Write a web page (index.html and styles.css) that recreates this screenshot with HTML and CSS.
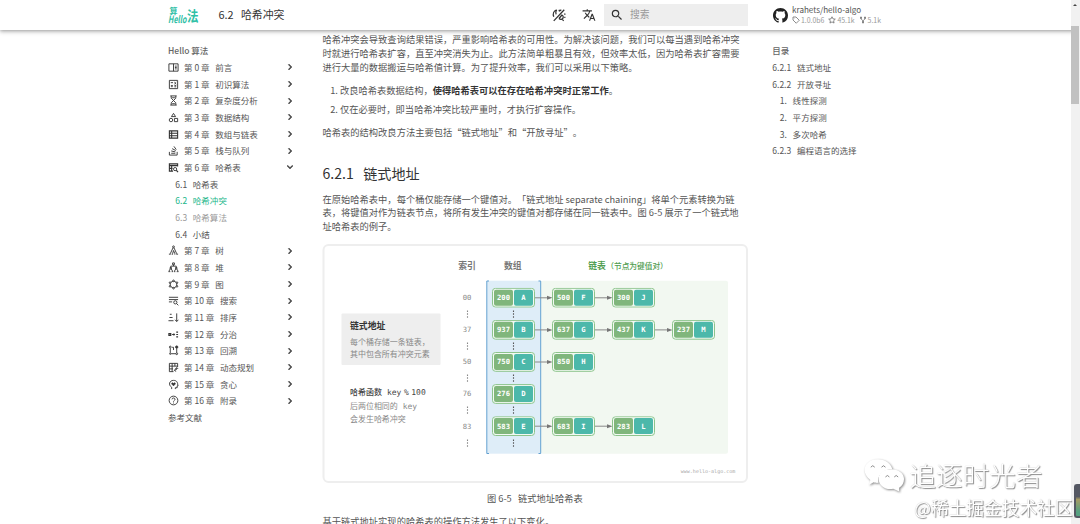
FILE: index.html
```
<!DOCTYPE html>
<html lang="zh-CN">
<head>
  <meta charset="UTF-8">
  <meta name="viewport" content="width=device-width, initial-scale=1.0">
  <title>6.2 哈希冲突 - Hello 算法</title>
  <link rel="stylesheet" href="styles.css">
</head>
<body>
  <svg class="defs" width="0" height="0">
    <symbol id="chevron" viewBox="0 0 24 24"><path d="M8.59 16.58 13.17 12 8.59 7.41 10 6l6 6-6 6z" stroke="currentColor"/></symbol>
    <symbol id="node" viewBox="0 0 43 20">
      <rect x=".5" y=".5" width="42" height="18.8" rx="3" fill="#f3faf3" stroke="#8cc48c"/>
      <rect x="2" y="1.9" width="19" height="16" rx="2" fill="#80b67c"/>
      <rect x="22" y="1.9" width="19" height="16" rx="2" fill="#4cb8aa"/>
    </symbol>
    <symbol id="arrow" viewBox="0 0 18 6"><path d="M0 3h13" stroke="#888" stroke-width="1"/><path d="M12 1l5.5 2L12 5z" fill="#777"/></symbol>
    <symbol id="dots" viewBox="0 0 2 8"><path d="M1 .4v1.5M1 3.3v1.5M1 6.2v1.5" stroke="currentColor" stroke-width="1.2"/></symbol>
  </svg>

  <header class="header">
    <svg class="logo" viewBox="0 0 32 30">
      <text x="1.5" y="13.6" font-size="8">算</text>
      <text x="0" y="22.5" font-size="10" font-style="italic" textLength="18.5" lengthAdjust="spacingAndGlyphs">Hello</text>
      <text x="19" y="20.5" font-size="14" textLength="11.5" lengthAdjust="spacingAndGlyphs">法</text>
    </svg>
    <div class="header-title">6.2 &nbsp; 哈希冲突</div>
    <div class="tools">
      <svg class="tool" viewBox="0 0 24 24" fill="none" stroke="#333" stroke-width="2.2"><path d="M3 22 21 3M8 3C3 5 1 10 3 15M8 3c-2 3-2 5-1 8M12 18l5-6c3 1 3 6 0 7-2 1-4 0-5-1M21 11l2-1M21 16h2M18 20l2 2M12 3l1 3M16 3l-3 2"/></svg>
      <svg class="tool" viewBox="0 0 24 24" fill="#333"><path d="m12.87 15.07-2.54-2.51.03-.03A17.52 17.52 0 0 0 14.07 6H17V4h-7V2H8v2H1v2h11.17C11.5 7.92 10.44 9.75 9 11.35 8.07 10.32 7.3 9.19 6.69 8h-2c.73 1.63 1.73 3.17 2.98 4.56l-5.09 5.02L4 19l5-5 3.11 3.11.76-2.04M18.5 10h-2L12 22h2l1.12-3h4.75L21 22h2l-4.5-12m-2.62 7 1.62-4.33L19.12 17h-3.24Z"/></svg>
    </div>
    <div class="search">
      <svg viewBox="0 0 24 24" fill="#333"><path d="M9.5 3A6.5 6.5 0 0 1 16 9.5c0 1.61-.59 3.09-1.56 4.23l.27.27h.79l5 5-1.5 1.5-5-5v-.79l-.27-.27A6.516 6.516 0 0 1 9.5 16 6.5 6.5 0 0 1 3 9.5 6.5 6.5 0 0 1 9.5 3m0 2C7 5 5 7 5 9.5S7 14 9.5 14 14 12 14 9.5 12 5 9.5 5Z"/></svg>
      <span>搜索</span>
    </div>
    <div class="source">
      <svg class="github" viewBox="0 0 16 16"><path d="M8 0C3.58 0 0 3.58 0 8c0 3.54 2.29 6.53 5.47 7.59.4.07.55-.17.55-.38 0-.19-.01-.82-.01-1.49-2.01.37-2.53-.49-2.69-.94-.09-.23-.48-.94-.82-1.13-.28-.15-.68-.52-.01-.53.63-.01 1.08.58 1.23.82.72 1.21 1.87.87 2.33.66.07-.52.28-.87.51-1.07-1.78-.2-3.64-.89-3.64-3.95 0-.87.31-1.59.82-2.15-.08-.2-.36-1.02.08-2.12 0 0 .67-.21 2.2.82.64-.18 1.32-.27 2-.27s1.36.09 2 .27c1.53-1.04 2.2-.82 2.2-.82.44 1.1.16 1.92.08 2.12.51.56.82 1.27.82 2.15 0 3.07-1.87 3.75-3.65 3.95.29.25.54.73.54 1.48 0 1.07-.01 1.93-.01 2.2 0 .21.15.46.55.38A8.01 8.01 0 0 0 16 8c0-4.42-3.58-8-8-8z"/></svg>
      <div>
        <div class="repo">krahets/hello-algo</div>
        <div class="facts">
          <svg viewBox="0 0 16 16"><path d="M2 2h6l6.500 6.500-6 6L2 8zM5 5h.5"/></svg><span>1.0.0b6</span>
          <svg viewBox="0 0 16 16"><path d="m8 1.500 2 4.300 4.600.5-3.400 3.200.9 4.600L8 11.800l-4.100 2.300.9-4.600L1.400 6.300 6 5.800z"/></svg><span>45.1k</span>
          <svg viewBox="0 0 16 16"><path d="M3 2h2v3H3zM11 2h2v3h-2zM7 11h2v3H7zM4 5c0 3 4 2 4 6 0-4 4-3 4-6"/></svg><span>5.1k</span>
        </div>
      </div>
    </div>
  </header>

  <div class="page">
    <nav class="nav">
      <div class="nav-title">Hello 算法</div>
      <div class="item"><svg class="icon" viewBox="0 0 24 24"><path d="M2 4h20v16H2zM12 4v16M15 9h4M15 12h4M15 15h4"/></svg><span>第 0 章 &nbsp; 前言</span><svg class="chev"><use href="#chevron"/></svg></div>
      <div class="item"><svg class="icon" viewBox="0 0 24 24"><path d="M3 3h18v18H3zM6 8h5M14 7l4 4M18 7l-4 4M6 15h5M8.500 13v5M14 14h4M14 17h4"/></svg><span>第 1 章 &nbsp; 初识算法</span><svg class="chev"><use href="#chevron"/></svg></div>
      <div class="item"><svg class="icon" viewBox="0 0 24 24"><path d="M5 2h14M5 22h14M7 2v5l5 5-5 5v5M17 2v5l-5 5 5 5v5M9 19h6M9 6h6"/></svg><span>第 2 章 &nbsp; 复杂度分析</span><svg class="chev"><use href="#chevron"/></svg></div>
      <div class="item"><svg class="icon" viewBox="0 0 24 24"><path d="m12 3-4.500 7h9zM14 14h7v7h-7z"/><circle cx="6.500" cy="17.500" r="3.800"/></svg><span>第 3 章 &nbsp; 数据结构</span><svg class="chev"><use href="#chevron"/></svg></div>
      <div class="item"><svg class="icon" viewBox="0 0 24 24"><path d="M3 4h18v16H3zM3 9.300h18M3 14.600h18M8 4v16" stroke-width="2.400"/></svg><span>第 4 章 &nbsp; 数组与链表</span><svg class="chev"><use href="#chevron"/></svg></div>
      <div class="item"><svg class="icon" viewBox="0 0 24 24"><path d="M3 15v7h17v-7M7 18h9M7 13l9 2M9 8l8 4M13 3l5 7"/></svg><span>第 5 章 &nbsp; 栈与队列</span><svg class="chev"><use href="#chevron"/></svg></div>
      <div class="item"><svg class="icon" viewBox="0 0 24 24"><path d="M11 20H3V4h18v6M3 8h18M8 8v12M3 14h7M18 18l4 4" stroke-width="2.400"/><circle cx="15.500" cy="15.500" r="3.500"/></svg><span>第 6 章 &nbsp; 哈希表</span><svg class="chev open"><use href="#chevron"/></svg></div>
      <div class="item sub">6.1 &nbsp; 哈希表</div>
      <div class="item sub active">6.2 &nbsp; 哈希冲突</div>
      <div class="item sub muted">6.3 &nbsp; 哈希算法</div>
      <div class="item sub">6.4 &nbsp; 小结</div>
      <div class="item"><svg class="icon" viewBox="0 0 24 24"><circle cx="12" cy="4" r="2"/><path d="m11 6-6 13M13 6l6 13M12 12l-2 7M12 12l3 7M2 20h4M8 20h3M14 20h2M18 20h4"/></svg><span>第 7 章 &nbsp; 树</span><svg class="chev"><use href="#chevron"/></svg></div>
      <div class="item"><svg class="icon" viewBox="0 0 24 24"><path d="M10 2h4v4h-4zM12 6v3M6 12V9h12v3M4.500 12h3v3h-3zM16.500 12h3v3h-3zM5 15l-3 5M7 15l3 5M17 15l-3 5M19 15l3 5M1 21h4M8 21h3M13 21h3M19 21h4"/></svg><span>第 8 章 &nbsp; 堆</span><svg class="chev"><use href="#chevron"/></svg></div>
      <div class="item"><svg class="icon" viewBox="0 0 24 24"><path d="m12 4 7 4v8l-7 4-7-4V8z"/><g fill="#fff"><circle cx="12" cy="4" r="1.800"/><circle cx="19.500" cy="8" r="1.800"/><circle cx="19.500" cy="16" r="1.800"/><circle cx="12" cy="20" r="1.800"/><circle cx="4.500" cy="16" r="1.800"/><circle cx="4.500" cy="8" r="1.800"/></g></svg><span>第 9 章 &nbsp; 图</span><svg class="chev"><use href="#chevron"/></svg></div>
      <div class="item"><svg class="icon" viewBox="0 0 24 24"><path d="M2 5h20M2 10h20M2 15h7M18.500 18.500l4 4"/><circle cx="16" cy="16" r="3.500"/></svg><span>第 10 章 &nbsp; 搜索</span><svg class="chev"><use href="#chevron"/></svg></div>
      <div class="item"><svg class="icon" viewBox="0 0 24 24"><path d="M4 5h4M3 12h7M1 19h11M19 3v17M15.500 17l3.500 4 3.500-4"/></svg><span>第 11 章 &nbsp; 排序</span><svg class="chev"><use href="#chevron"/></svg></div>
      <div class="item"><svg class="icon" viewBox="0 0 24 24"><path d="M2 10h4v4H2zM9 12h5M12 10l2 2-2 2M18 7h4M18 12h4M18 17h4" stroke-width="2.600"/></svg><span>第 12 章 &nbsp; 分治</span><svg class="chev"><use href="#chevron"/></svg></div>
      <div class="item"><svg class="icon" viewBox="0 0 24 24"><circle cx="5" cy="4.500" r="2"/><circle cx="19" cy="4.500" r="2.500" fill="#333"/><circle cx="5" cy="19" r="1.500"/><circle cx="19" cy="19" r="2"/><path d="M5 7v10M7 19h10M19 17V7M9 5h3v6"/></svg><span>第 13 章 &nbsp; 回溯</span><svg class="chev"><use href="#chevron"/></svg></div>
      <div class="item"><svg class="icon" viewBox="0 0 24 24"><path d="M12 21H3V3h18v8M3 9h18M3 15h8M9 3v18M15 3v6M14 18c4 0 5-1 5-5M16 15l3-3 3 3M17 15l-3 3 3 3"/></svg><span>第 14 章 &nbsp; 动态规划</span><svg class="chev"><use href="#chevron"/></svg></div>
      <div class="item"><svg class="icon" viewBox="0 0 24 24"><path d="M8 22v-4C0 13 3 3 12 3c8 0 9 6 9 8l1 4h-2v4h-4v3"/><path d="m12 15-4-4c-1-3 3-4 4-1 1-3 5-2 4 1z" fill="#333" stroke-width="1"/></svg><span>第 15 章 &nbsp; 贪心</span><svg class="chev"><use href="#chevron"/></svg></div>
      <div class="item"><svg class="icon" viewBox="0 0 24 24"><circle cx="12" cy="12" r="9.500"/><path d="M8.800 9.500c0-4 6.500-4 6.500 0 0 2.500-3.300 2.500-3.300 5M12 16.500v2"/></svg><span>第 16 章 &nbsp; 附录</span><svg class="chev"><use href="#chevron"/></svg></div>
      <div class="item">参考文献</div>
    </nav>

    <main class="content">
      <p>哈希冲突会导致查询结果错误，严重影响哈希表的可用性。为解决该问题，我们可以每当遇到哈希冲突时就进行哈希表扩容，直至冲突消失为止。此方法简单粗暴且有效，但效率太低，因为哈希表扩容需要进行大量的数据搬运与哈希值计算。为了提升效率，我们可以采用以下策略。</p>
      <ol>
        <li>改良哈希表数据结构，<strong>使得哈希表可以在存在哈希冲突时正常工作</strong>。</li>
        <li>仅在必要时，即当哈希冲突比较严重时，才执行扩容操作。</li>
      </ol>
      <p>哈希表的结构改良方法主要包括“链式地址”和“开放寻址”。</p>
      <h2>6.2.1 &nbsp; 链式地址</h2>
      <p>在原始哈希表中，每个桶仅能存储一个键值对。「链式地址 separate chaining」将单个元素转换为链表，将键值对作为链表节点，将所有发生冲突的键值对都存储在同一链表中。图 6-5 展示了一个链式地址哈希表的例子。</p>

      <figure>
        <svg class="diagram" viewBox="0 0 426 239">
          <rect x="1.500" y="1" width="423.500" height="237" rx="5" fill="#fff" stroke="#eee" stroke-width="2"/>
          <rect x="19.500" y="69.500" width="99" height="51.500" rx="1" fill="#eee"/>
          <rect x="219" y="36.700" width="187" height="173" rx="2" fill="#f2f8f1"/>
          <rect x="165" y="36.700" width="53.500" height="173" fill="#deedf8"/>
          <path d="M167 37h-2.200v172.500h2.200M216.500 37h2.200v172.500h-2.200" fill="none" stroke="#62a0d0"/>

          <g class="head">
            <text x="145" y="25.300">索引</text>
            <text x="190.700" y="25.300">数组</text>
            <text x="275" y="25.300" class="green">链表</text>
          </g>
          <text x="284.300" y="25" class="green note">（节点为键值对）</text>

          <text x="28" y="85" class="card-title">链式地址</text>
          <g class="desc">
            <text x="28" y="100.700">每个桶存储一条链表，</text>
            <text x="28" y="112.700">其中包含所有冲突元素</text>
            <text x="28" y="151" class="strong">哈希函数<tspan class="mono" x="65">key</tspan><tspan class="mono" x="82">%</tspan><tspan class="mono" x="89.300">100</tspan></text>
            <text x="28" y="165.300">后两位相同的<tspan class="mono" x="80.700">key</tspan></text>
            <text x="28" y="177.700">会发生哈希冲突</text>
          </g>

          <g class="index">
            <text x="145" y="56.100">00</text>
            <text x="145" y="88.200">37</text>
            <text x="145" y="120.300">50</text>
            <text x="145" y="152.400">76</text>
            <text x="145" y="184.500">83</text>
          </g>

          <g color="#888">
            <use href="#dots" x="144.500" y="66" width="2" height="8"/>
            <use href="#dots" x="144.500" y="98" width="2" height="8"/>
            <use href="#dots" x="144.500" y="130" width="2" height="8"/>
            <use href="#dots" x="144.500" y="162" width="2" height="8"/>
            <use href="#dots" x="144.500" y="195" width="2" height="8"/>
          </g>
          <g color="#555">
            <use href="#dots" x="190.500" y="66" width="2" height="8"/>
            <use href="#dots" x="190.500" y="98" width="2" height="8"/>
            <use href="#dots" x="190.500" y="130" width="2" height="8"/>
            <use href="#dots" x="190.500" y="162" width="2" height="8"/>
            <use href="#dots" x="190.500" y="195" width="2" height="8"/>
          </g>

          <!-- buckets and their chains -->
          <g class="row" transform="translate(170 43.800)">
            <use href="#node" width="43" height="20"/><text x="11.500" y="12.400">200</text><text x="31.500" y="12.400">A</text>
            <use href="#arrow" x="43" y="7" width="18" height="6"/>
            <use href="#node" x="60" width="43" height="20"/><text x="71.500" y="12.400">500</text><text x="91.500" y="12.400">F</text>
            <use href="#arrow" x="103" y="7" width="18" height="6"/>
            <use href="#node" x="120" width="43" height="20"/><text x="131.500" y="12.400">300</text><text x="151.500" y="12.400">J</text>
          </g>
          <g class="row" transform="translate(170 75.900)">
            <use href="#node" width="43" height="20"/><text x="11.500" y="12.400">937</text><text x="31.500" y="12.400">B</text>
            <use href="#arrow" x="43" y="7" width="18" height="6"/>
            <use href="#node" x="60" width="43" height="20"/><text x="71.500" y="12.400">637</text><text x="91.500" y="12.400">G</text>
            <use href="#arrow" x="103" y="7" width="18" height="6"/>
            <use href="#node" x="120" width="43" height="20"/><text x="131.500" y="12.400">437</text><text x="151.500" y="12.400">K</text>
            <use href="#arrow" x="163" y="7" width="18" height="6"/>
            <use href="#node" x="180" width="43" height="20"/><text x="191.500" y="12.400">237</text><text x="211.500" y="12.400">M</text>
          </g>
          <g class="row" transform="translate(170 108)">
            <use href="#node" width="43" height="20"/><text x="11.500" y="12.400">750</text><text x="31.500" y="12.400">C</text>
            <use href="#arrow" x="43" y="7" width="18" height="6"/>
            <use href="#node" x="60" width="43" height="20"/><text x="71.500" y="12.400">850</text><text x="91.500" y="12.400">H</text>
          </g>
          <g class="row" transform="translate(170 140.100)">
            <use href="#node" width="43" height="20"/><text x="11.500" y="12.400">276</text><text x="31.500" y="12.400">D</text>
          </g>
          <g class="row" transform="translate(170 172.200)">
            <use href="#node" width="43" height="20"/><text x="11.500" y="12.400">583</text><text x="31.500" y="12.400">E</text>
            <use href="#arrow" x="43" y="7" width="18" height="6"/>
            <use href="#node" x="60" width="43" height="20"/><text x="71.500" y="12.400">683</text><text x="91.500" y="12.400">I</text>
            <use href="#arrow" x="103" y="7" width="18" height="6"/>
            <use href="#node" x="120" width="43" height="20"/><text x="131.500" y="12.400">283</text><text x="151.500" y="12.400">L</text>
          </g>

          <text x="358.700" y="229" class="site">www.hello-algo.com</text>
        </svg>
        <figcaption>图 6-5 &nbsp; 链式地址哈希表</figcaption>
      </figure>
      <p>基于链式地址实现的哈希表的操作方法发生了以下变化。</p>
    </main>

    <aside class="toc">
      <div class="toc-title">目录</div>
      <div>6.2.1 &nbsp; 链式地址</div>
      <div>6.2.2 &nbsp; 开放寻址</div>
      <div class="deep">1. &nbsp; 线性探测</div>
      <div class="deep">2. &nbsp; 平方探测</div>
      <div class="deep">3. &nbsp; 多次哈希</div>
      <div>6.2.3 &nbsp; 编程语言的选择</div>
    </aside>
  </div>

  <div class="scrollbar"><div class="up"></div><div class="thumb"></div></div>
  <div class="widget"></div>

  <div class="watermark">
    <div class="account">
      <svg viewBox="0 0 44 34">
        <path d="M7 27l1.500-5C-3 13 4 1 16 1c8 0 14 5 15 10-9 0-16 6-14 14-2 .3-4 0-5-.5z"/>
        <path d="M38 34l-6-3c-7 2-15-3-15-10S23 11 30 11s13 4 13 10c0 4-2 7-5 9z"/>
        <path class="eye" d="M9 9q2-3 4 0M20 9q2-3 4 0M24 19q2-3 4 0M33 19q2-3 4 0"/>
      </svg>
      <span>追逐时光者</span>
    </div>
    <div class="community">@稀土掘金技术社区</div>
  </div>
</body>
</html>
```
FILE: styles.css
```
* {
  box-sizing: border-box;
}

body {
  margin: 0;
  height: 524px;
  overflow: hidden;
  background: #fff;
  color: #555;
  font-family: "Noto Sans CJK SC", sans-serif;
  font-size: 9.28px;
  line-height: 13.8px;
  text-spacing-trim: space-all;
}

.defs {
  display: block;
}

/* top bar */
.header {
  position: relative;
  z-index: 2;
  display: flex;
  align-items: center;
  height: 30px;
  padding-left: 168px;
  background: #fff;
  box-shadow: 0 0 3px rgba(0, 0, 0, 0.2), 0 2px 4px rgba(0, 0, 0, 0.25);
}

.logo {
  width: 32px;
  height: 30px;
  fill: #2fc0a6;
  font-weight: bold;
}

.header-title {
  width: 333px;
  margin-left: 18.500px;
  font-size: 10.9px;
  color: #333;
}

.tools {
  display: flex;
  gap: 16px;
}

.tool {
  width: 14px;
  height: 14px;
}

.search {
  display: flex;
  align-items: center;
  width: 144px;
  height: 22px;
  margin-left: 8.500px;
  padding-left: 6px;
  background: #eee;
  color: #999;
  font-size: 9.8px;
}

.search svg {
  width: 14px;
  height: 14px;
  margin-right: 6px;
}

.source {
  display: flex;
  align-items: center;
  margin-left: 25px;
}

.github {
  width: 15px;
  height: 15px;
  margin-right: 4px;
  fill: #222;
}

.repo {
  height: 10px;
  font-size: 8.100px;
  line-height: 9px;
}

.facts {
  display: flex;
  align-items: center;
  height: 10px;
  color: #999;
  font-size: 6.900px;
  line-height: 10px;
}

.facts svg {
  width: 8px;
  height: 8px;
  margin-right: 1px;
  fill: none;
  stroke: #666;
  stroke-width: 1.500;
}

.facts span {
  margin-right: 4px;
}

/* three columns */
.page {
  display: grid;
  grid-template-columns: 130px 425.300px 140px;
  column-gap: 24.500px;
  padding-left: 168px;
}

.nav,
.toc {
  padding-top: 12.400px;
  font-size: 8.530px;
  line-height: 16.640px;
}

.nav-title,
.toc-title {
  color: #666;
  font-weight: 500;
}

.item {
  display: flex;
  align-items: center;
  height: 16.680px;
}

.icon {
  width: 11px;
  height: 11px;
  margin-right: 5px;
  fill: none;
  stroke: #333;
  stroke-width: 2;
}

.chev {
  width: 12px;
  height: 12px;
  margin-left: auto;
  margin-right: 2.500px;
  fill: #333;
}

.open {
  transform: rotate(90deg);
}

.sub {
  padding-left: 7.300px;
}

.active {
  color: #21b68a;
}

.muted {
  color: #999;
}

.content {
  padding-top: 3.300px;
}

.content p {
  margin: 0 0 9.500px;
}

.content ol {
  margin: 0 0 9px;
  padding-left: 17.500px;
}

.content li {
  margin-bottom: 5.100px;
}

.content strong {
  color: #333;
}

.content h2 {
  margin: 23.500px 0 9.500px;
  color: #333;
  font-size: 14.100px;
  font-weight: normal;
  line-height: 20px;
}

figure {
  margin: 0 0 0 -0.500px;
}

.diagram {
  display: block;
  width: 426px;
  height: 239px;
}

figcaption {
  margin: 9.500px 0;
  text-align: center;
}

.deep {
  padding-left: 7.500px;
}

/* diagram text */
.head {
  fill: #777;
  font-size: 8.800px;
  font-weight: bold;
  text-anchor: middle;
}

.diagram .green {
  fill: #4f9d4f;
}

.note {
  font-size: 7.700px;
  font-weight: 500;
}

.card-title {
  fill: #333;
  font-size: 8.830px;
  font-weight: bold;
}

.desc {
  fill: #888;
  font-size: 7.970px;
}

.strong {
  fill: #444;
  font-weight: 500;
}

.mono,
.index,
.row,
.site {
  font-family: "DejaVu Sans Mono", monospace;
}

.index {
  fill: #888;
  font-size: 7.200px;
  text-anchor: middle;
}

.row {
  fill: #fff;
  font-size: 7.200px;
  font-weight: bold;
  text-anchor: middle;
}

.site {
  fill: #aaa;
  font-size: 5.050px;
}

/* browser scrollbar */
.scrollbar {
  position: fixed;
  top: 0;
  right: 0;
  z-index: 3;
  width: 9.500px;
  height: 524px;
  background: #f1f1f1;
}

.up {
  width: 0;
  margin: 4px auto 20px;
  border: 2px solid transparent;
  border-top: 0;
  border-bottom-color: #444;
}

.thumb {
  width: 8px;
  height: 78px;
  margin: 0 auto;
  background: #c1c1c1;
}

.widget {
  position: fixed;
  right: 0;
  top: 484px;
  z-index: 4;
  width: 6px;
  height: 34px;
  border: 2px solid #555863;
  border-right: 0;
  border-radius: 3px 0 0 3px;
  background: linear-gradient(#555863 35%, #a59b63 45%, #55a080 85%);
}

/* watermark */
.watermark {
  position: fixed;
  right: 7.500px;
  bottom: 6px;
  z-index: 5;
  color: #fff;
  text-align: right;
  text-shadow: 1px 1px 1px #888, 0 0 1px #bbb;
}

.account {
  display: flex;
  align-items: center;
  justify-content: flex-end;
  gap: 5px;
  margin-right: 30px;
  font-size: 26.600px;
  font-weight: 300;
  line-height: 36px;
}

.account svg {
  width: 43px;
  height: 34px;
  overflow: visible;
  fill: #fff;
  filter: drop-shadow(1px 1px 1px #888);
}

.account .eye {
  fill: none;
  stroke: #888;
}

.community {
  margin-top: 3px;
  font-size: 17.700px;
  line-height: 22px;
}
```
